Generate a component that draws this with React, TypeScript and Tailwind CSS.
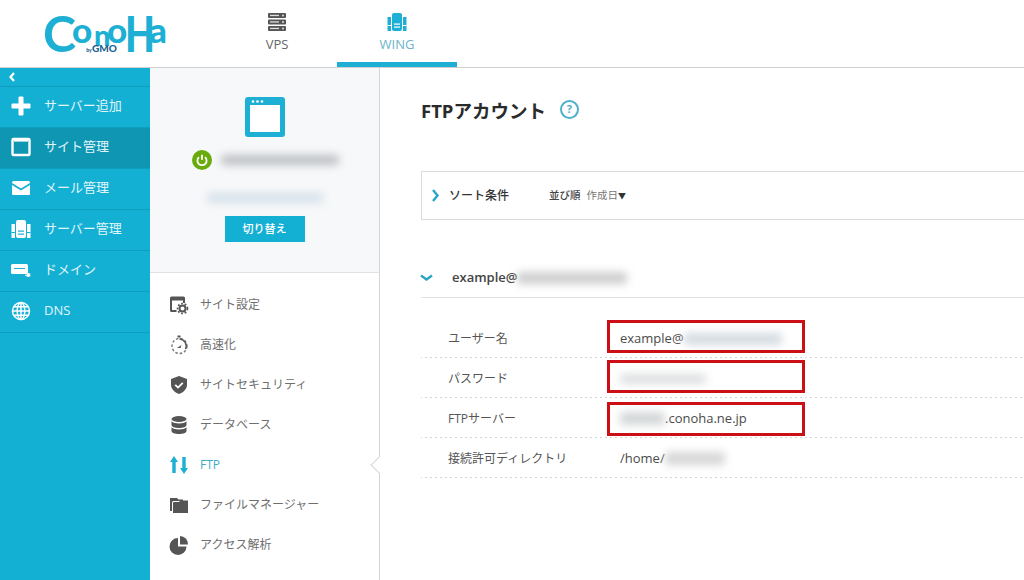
import type { ReactNode } from 'react';

const FONT = "font-['Open_Sans','Noto_Sans_CJK_JP',sans-serif]";

function Logo() {
  return (
    <svg width="135" height="66" viewBox="0 0 135 66" className="block">
      <text fontFamily="Lato, sans-serif" className="fill-[#1eb0d4] font-black">
        <tspan x="0" y="51.500" fontSize="50" className="font-bold">C</tspan>
        <tspan x="29" y="43" fontSize="35">o</tspan>
        <tspan x="51" y="46" fontSize="29">n</tspan>
        <tspan x="64" y="43" fontSize="35">o</tspan>
        <tspan x="82" y="52" fontSize="50" textLength="30" lengthAdjust="spacingAndGlyphs">H</tspan>
        <tspan x="106" y="43" fontSize="35">a</tspan>
        <tspan x="42" y="52" fontSize="5" className="fill-[#1b5f8f]"> by</tspan>
        <tspan x="49" y="52" fontSize="10" className="fill-[#1b5f8f]">GMO</tspan>
      </text>
    </svg>
  );
}

function VpsIcon() {
  return (
    <svg width="20" height="18" viewBox="0 0 20 18" className="block">
      {[0, 6.5, 13].map((y) => (
        <g key={y}>
          <rect x="1" y={y} width="18" height="5" rx="1" fill="#555" />
          <rect x="3" y={y + 1.8} width="9" height="1.3" fill="#ddd" />
          <circle cx="16" cy={y + 2.5} r="1" fill="#ddd" />
        </g>
      ))}
    </svg>
  );
}

function WingIcon({ color = '#1eb0d4', cut = '#fff' }: { color?: string; cut?: string }) {
  return (
    <svg width="20" height="20" viewBox="0 0 20 20" className="block">
      <rect x="0.500" y="5" width="3.500" height="14" fill={color} />
      <rect x="16" y="5" width="3.500" height="14" fill={color} />
      <rect x="5" y="1" width="10" height="18" rx="2" fill={color} />
      <rect x="7" y="11.500" width="6" height="1.200" fill={cut} />
      <rect x="7" y="14.500" width="6" height="1.200" fill={cut} />
      <rect x="0.500" y="13" width="3.500" height="1" fill={cut} />
      <rect x="16" y="13" width="3.500" height="1" fill={cut} />
    </svg>
  );
}

function PlusIcon() {
  return (
    <svg width="20" height="20" viewBox="0 0 20 20" className="block">
      <path d="M8 1h4v7h7v4h-7v7H8v-7H1V8h7z" fill="#fff" stroke="#fff" strokeLinejoin="round" />
    </svg>
  );
}

function WindowNavIcon() {
  return (
    <svg width="20" height="20" viewBox="0 0 20 20" className="block">
      <rect x="1.500" y="2" width="17" height="16" rx="1" fill="none" stroke="#fff" strokeWidth="2.400" />
      <rect x="3" y="3" width="14" height="1.600" fill="#fff" />
    </svg>
  );
}

function MailIcon() {
  return (
    <svg width="20" height="16" viewBox="0 0 20 16" className="block">
      <path d="M1 2.500A1.500 1.500 0 0 1 2.500 1h15A1.500 1.500 0 0 1 19 2.500v.5l-9 5.500L1 3z" fill="#fff" />
      <path d="M1 5l9 5.500L19 5v9a1 1 0 0 1-1 1H2a1 1 0 0 1-1-1z" fill="#fff" />
    </svg>
  );
}

function DomainIcon() {
  return (
    <svg width="22" height="18" viewBox="0 0 22 18" className="block">
      <rect x="1" y="3" width="17" height="10" rx="1.500" fill="#fff" />
      <rect x="4" y="7" width="11" height="1" fill="#1bb0d3" />
      <circle cx="18.500" cy="14" r="2" fill="#fff" />
      <path d="M17 15l-2-1" stroke="#fff" strokeWidth="1" />
    </svg>
  );
}

function GlobeIcon() {
  return (
    <svg width="20" height="20" viewBox="0 0 20 20" fill="none" stroke="#fff" strokeWidth="1.500" className="block">
      <circle cx="10" cy="10" r="8.500" />
      <ellipse cx="10" cy="10" rx="3.800" ry="8.500" />
      <path d="M10 1.500v17M1.500 10h17M2.800 5.800h14.400M2.800 14.200h14.400" />
    </svg>
  );
}

function SiteSettingIcon() {
  return (
    <svg width="20" height="20" viewBox="0 0 20 20" className="block">
      <path d="M1 3a1.500 1.500 0 0 1 1.500-1.500h12A1.500 1.500 0 0 1 16 3v5h-2V5.500H3V15h4.500v2h-5A1.500 1.500 0 0 1 1 15.500z" fill="#555" />
      <circle cx="13.500" cy="13.500" r="3" fill="none" stroke="#555" strokeWidth="2" />
      <circle cx="13.500" cy="13.500" r="5" fill="none" stroke="#555" strokeWidth="1.600" strokeDasharray="1.800 1.800" />
    </svg>
  );
}

function SpeedIcon() {
  return (
    <svg width="20" height="20" viewBox="0 0 20 20" fill="none" className="block">
      <rect x="8.500" y="0.500" width="3" height="2" fill="#555" />
      <circle cx="10.500" cy="11" r="7.500" stroke="#777" strokeWidth="1.400" strokeDasharray="2.500 2" />
      <path d="M10.500 4a7 7 0 0 1 6 10" stroke="#555" strokeWidth="1.500" />
      <path d="M8 13l4.500-3-1 3z" fill="#555" />
    </svg>
  );
}

function ShieldIcon() {
  return (
    <svg width="20" height="20" viewBox="0 0 20 20" className="block">
      <path d="M10 1l8 3v5.500c0 4.500-3.400 7.800-8 9.500-4.600-1.700-8-5-8-9.500V4z" fill="#555" />
      <path d="M6.200 9.800l2.800 2.800 4.800-4.800" fill="none" stroke="#fff" strokeWidth="1.800" />
    </svg>
  );
}

function DatabaseIcon() {
  return (
    <svg width="20" height="20" viewBox="0 0 20 20" className="block">
      <ellipse cx="10" cy="4" rx="7.500" ry="3" fill="#555" />
      <path d="M2.500 6.200c1.500 1.500 4 2.200 7.500 2.200s6-.7 7.500-2.200V10c0 1.700-3.400 3-7.500 3s-7.500-1.300-7.500-3z" fill="#555" />
      <path d="M2.500 12.200c1.500 1.500 4 2.200 7.500 2.200s6-.7 7.500-2.200V16c0 1.700-3.400 3-7.500 3s-7.500-1.300-7.500-3z" fill="#555" />
    </svg>
  );
}

function FtpIcon() {
  return (
    <svg width="20" height="20" viewBox="0 0 20 20" className="block">
      <path d="M5 1l4 6H6.700v11H3.300V7H1z" fill="#1eb0d4" />
      <path d="M15 19l4-6h-2.300V2h-3.400v11H11z" fill="#1eb0d4" />
    </svg>
  );
}

function FolderIcon() {
  return (
    <svg width="20" height="20" viewBox="0 0 20 20" className="block">
      <path d="M1 3h7l1.500 1.500H14V6H4.500A1.500 1.500 0 0 0 3 7.500V16H1z" fill="#555" />
      <path d="M4 8a1 1 0 0 1 1-1h5l1.500-1.500H19V18H4z" fill="#555" />
    </svg>
  );
}

function PieIcon() {
  return (
    <svg width="20" height="20" viewBox="0 0 20 20" className="block">
      <path d="M9 3v8.500h8.500A8.500 8.500 0 1 1 9 3z" fill="#555" />
      <path d="M11 1a8 8 0 0 1 8 8.500h-8z" fill="#555" />
    </svg>
  );
}

function Blur({ className }: { className: string }) {
  return <span className={`block rounded-sm blur-[4px] ${className}`} />;
}

const NAV = [
  { label: 'サーバー追加', icon: <PlusIcon /> },
  { label: 'サイト管理', icon: <WindowNavIcon />, active: true },
  { label: 'メール管理', icon: <MailIcon /> },
  { label: 'サーバー管理', icon: <WingIcon color="#fff" cut="#14b0d4" /> },
  { label: 'ドメイン', icon: <DomainIcon /> },
  { label: 'DNS', icon: <GlobeIcon /> },
];

const MENU = [
  { label: 'サイト設定', icon: <SiteSettingIcon /> },
  { label: '高速化', icon: <SpeedIcon /> },
  { label: 'サイトセキュリティ', icon: <ShieldIcon /> },
  { label: 'データベース', icon: <DatabaseIcon /> },
  { label: 'FTP', icon: <FtpIcon />, active: true },
  { label: 'ファイルマネージャー', icon: <FolderIcon /> },
  { label: 'アクセス解析', icon: <PieIcon /> },
];

function Header() {
  return (
    <header className="flex h-[68px] shrink-0 border-b border-[#d0d0d0] bg-white">
      <div className="w-[217px] shrink-0 pl-[43px]">
        <Logo />
      </div>
      <div className="flex w-[120px] flex-col items-center pt-[13px] text-[#666]">
        <VpsIcon />
        <span className="mt-[5px] text-[13px] leading-4">VPS</span>
      </div>
      <div className="flex h-[67px] w-[120px] flex-col items-center border-b-[5px] border-[#1eb0d4] pt-[12px] text-[#6cb2ca]">
        <WingIcon />
        <span className="mt-[4px] text-[13px] leading-4">WING</span>
      </div>
    </header>
  );
}

function Sidebar() {
  return (
    <nav className="w-[150px] shrink-0 bg-[#14b0d4] text-[13px] text-[#e0f5fa]">
      <div className="flex h-[19px] items-center border-b border-[#0f9dbe] pl-[8px]">
        <svg width="8" height="10" viewBox="0 0 8 10" className="block">
          <path d="M6 1L2.500 5 6 9" fill="none" stroke="#fff" strokeWidth="2.200" />
        </svg>
      </div>
      {NAV.map((item) => (
        <div
          key={item.label}
          className={`flex h-[41px] items-center border-b border-[#0f9dbe] pb-[2px] ${item.active ? 'bg-[#0f96b3]' : ''}`}
        >
          <span className="flex w-[44px] justify-center pr-[2px]">{item.icon}</span>
          <span>{item.label}</span>
        </div>
      ))}
    </nav>
  );
}

function SitePanel() {
  return (
    <aside className="relative w-[230px] shrink-0 border-r border-[#d5d5d5] bg-white">
      <div className="flex h-[205px] flex-col items-center border-b border-[#dfe2e4] bg-[#f7f8f9] pt-[29px]">
        <svg width="40" height="40" viewBox="0 0 40 40" className="block">
          <rect width="40" height="40" rx="3" fill="#1eb0d4" />
          <rect x="5" y="8" width="30" height="27" fill="#fff" />
          <circle cx="8" cy="4.500" r="1.300" fill="#fff" />
          <circle cx="12.500" cy="4.500" r="1.300" fill="#fff" />
          <circle cx="17" cy="4.500" r="1.300" fill="#fff" />
        </svg>
        <div className="mt-[13px] flex h-[20px] items-center gap-[9px] pl-[1px]">
          <svg width="20" height="20" viewBox="0 0 20 20" className="block">
            <circle cx="10" cy="10" r="10" fill="#6aab0c" />
            <path d="M6.900 7.200a4.600 4.600 0 1 0 6.200 0" fill="none" stroke="#fff" strokeWidth="1.800" />
            <path d="M10 4.800v5" stroke="#fff" strokeWidth="1.800" />
          </svg>
          <Blur className="h-[10px] w-[118px] bg-[#bcbfc2]" />
        </div>
        <Blur className="mt-[23px] h-[10px] w-[116px] bg-[#d5e1ea]" />
        <button className="mt-[13px] h-[26px] w-[80px] bg-[#14b0d4] text-[11px] font-medium text-white">切り替え</button>
      </div>
      <ul className="pt-[12px] text-[12px] text-[#6f6f6f]">
        {MENU.map((item) => (
          <li key={item.label} className={`flex h-[40px] items-center ${item.active ? 'text-[#3fa9c6]' : ''}`}>
            <span className="flex w-[50px] justify-center pl-[8px]">{item.icon}</span>
            <span>{item.label}</span>
          </li>
        ))}
      </ul>
      {/* notch pointing at the selected row */}
      <span className="absolute left-[223px] top-[391px] h-[12px] w-[12px] rotate-45 border-b border-l border-[#d5d5d5] bg-white" />
    </aside>
  );
}

function InfoRow({ label, children }: { label: string; children: ReactNode }) {
  return (
    <div className="flex h-[40px] items-center bg-[linear-gradient(to_right,#d4d4d4_2px,transparent_2px)] bg-[length:5px_1px] bg-bottom bg-repeat-x pt-[1px]">
      <span className="w-[172px] pl-[27px] text-[12px] text-[#555]">{label}</span>
      <div className="flex items-center text-[13px] text-[#4a4a4a]">{children}</div>
    </div>
  );
}

function Main() {
  return (
    <main className="relative min-w-0 flex-1 bg-white pl-[41px]">
      <div className="flex h-[103px] items-start pt-[29px]">
        <h1 className="text-[18.500px] font-bold leading-7 text-[#2a2a2a]">FTPアカウント</h1>
        <span className="ml-[14px] mt-[3px] flex h-[19px] w-[19px] items-center justify-center rounded-full border-2 border-[#4fb0ca] text-[11px] font-bold text-[#4fb0ca]">?</span>
      </div>
      <div className="-mr-px flex h-[49px] items-center border border-r-0 border-[#dcdcdc]">
        <svg width="9" height="13" viewBox="0 0 9 13" className="ml-[9px] block">
          <path d="M2 1l4.500 5.500L2 12" fill="none" stroke="#2aa5c6" strokeWidth="2.400" />
        </svg>
        <span className="ml-[9px] w-[100px] text-[12px] font-medium text-[#333]">ソート条件</span>
        <span className="text-[10.500px] font-medium text-[#444]">並び順</span>
        <span className="ml-[6px] text-[10.500px] text-[#777]">作成日</span>
        <span className="text-[8px] text-[#333]">▼</span>
      </div>
      <div className="mt-[37px] flex h-[41px] items-center border-b border-[#e2e2e2] pt-[1px]">
        <svg width="13" height="8" viewBox="0 0 13 8" className="-ml-px block">
          <path d="M1 1.500l5.500 4 5.500-4" fill="none" stroke="#2aa5c6" strokeWidth="2.400" />
        </svg>
        <span className="ml-[19px] text-[13px] font-semibold text-[#444]">example@</span>
        <Blur className="h-[12px] w-[110px] bg-[#cdcdcd]" />
      </div>
      <div className="relative pt-[20px]">
        <InfoRow label="ユーザー名">
          <span className="ml-[27px]">example@</span>
          <Blur className="h-[12px] w-[98px] bg-[#d4dbe0]" />
        </InfoRow>
        <InfoRow label="パスワード">
          <Blur className="ml-[27px] h-[10px] w-[86px] bg-[#dcdee0]" />
        </InfoRow>
        <InfoRow label="FTPサーバー">
          <Blur className="ml-[27px] h-[13px] w-[45px] bg-[#d3d6d8]" />
          <span>.conoha.ne.jp</span>
        </InfoRow>
        <InfoRow label="接続許可ディレクトリ">
          <span className="ml-[27px]">/home/</span>
          <Blur className="h-[13px] w-[60px] bg-[#d6d6d6]" />
        </InfoRow>
        {/* red annotation boxes drawn over the rows */}
        <span className="absolute left-[186px] top-[22px] h-[33px] w-[198px] border-[3px] border-[#cc0f16]" />
        <span className="absolute left-[186px] top-[62px] h-[33px] w-[198px] border-[3px] border-[#cc0f16]" />
        <span className="absolute left-[186px] top-[104px] h-[34px] w-[198px] border-[3px] border-[#cc0f16]" />
      </div>
    </main>
  );
}

export default function App() {
  return (
    <div className={`flex h-[580px] w-[1024px] flex-col overflow-hidden bg-white ${FONT}`}>
      <Header />
      <div className="flex min-h-0 flex-1">
        <Sidebar />
        <SitePanel />
        <Main />
      </div>
    </div>
  );
}
